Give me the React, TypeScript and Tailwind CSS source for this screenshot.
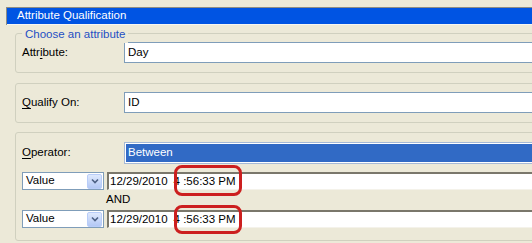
import React from 'react';

const font = { fontFamily: '"Liberation Sans", Arial, sans-serif' };

function Label({ pre, u, post }: { pre: string; u: string; post: string }) {
  return (
    <span className="w-[102px] shrink-0 text-[11.5px] text-black">
      {pre}
      <span className="underline underline-offset-2">{u}</span>
      {post}
    </span>
  );
}

function Combo() {
  return (
    <div className="flex h-[18px] w-[82px] shrink-0 items-center justify-between border border-[#7f9db9] bg-white pl-[3px] pr-px text-[11.5px]">
      <span>Value</span>
      <div className="flex h-[15px] w-[15px] items-center justify-center rounded-[2px] border border-[#b9cdf9] bg-gradient-to-b from-[#dfe9fd] to-[#b3c8f5]">
        <svg width="8" height="6" viewBox="0 0 8 6">
          <path d="M1 1.5 L4 4.5 L7 1.5" fill="none" stroke="#4d6185" strokeWidth="1.6" />
        </svg>
      </div>
    </div>
  );
}

function DateRow({ tall }: { tall?: boolean }) {
  return (
    <div className="flex items-center gap-[3px]">
      <Combo />
      <div className="relative flex h-[18px] flex-1 items-center border-t-2 border-l-2 border-t-[#7a776b] border-l-[#7a776b] border-b border-r border-b-[#f4f2ea] border-r-[#f4f2ea] bg-white pl-[1px] text-[11.5px]">
        <span>12/29/2010</span>
        <span className="ml-[6px]">4 :56:33 PM</span>
        <div
          className={
            tall
              ? 'absolute -top-[9px] left-[65px] h-[31px] w-[68px] rounded-[8px] border-[3px] border-[#cc1f1f]'
              : 'absolute -top-[7px] left-[65px] h-[29px] w-[68px] rounded-[8px] border-[3px] border-[#cc1f1f]'
          }
        />
      </div>
    </div>
  );
}

export default function App() {
  return (
    <div className="relative h-[243px] w-[532px] overflow-hidden bg-[#ece9d8]" style={font}>
      <div className="ml-[6px] mt-[7px] border-l border-t border-[#8d8c84]">
        <div className="flex h-[16px] items-center bg-[#0054e3] pl-[10px] text-[11.5px] text-white">
          Attribute Qualification
        </div>
        <div className="h-px bg-[#f7f6f1]" />
      </div>

      <div className="ml-[15px] w-[540px]">
        {/* group 1 */}
        <div className="relative mt-[8px] rounded-[3px] border border-[#d0d0bf] pl-[6px] pt-[8px] pb-[9px]">
          <span className="absolute -top-[8px] left-[6px] bg-[#ece9d8] px-[3px] text-[11.5px] text-[#1e4fc4]">
            Choose an attribute
          </span>
          <div className="flex items-center">
            <Label pre="Attr" u="i" post="bute:" />
            <div className="flex h-[21px] flex-1 items-center border border-[#7f9db9] bg-white pl-[3px] text-[11.5px]">Day</div>
          </div>
        </div>

        {/* group 2 */}
        <div className="mt-[10px] rounded-[3px] border border-[#d0d0bf] pl-[6px] pt-[8px] pb-[9px]">
          <div className="flex items-center">
            <Label pre="" u="Q" post="ualify On:" />
            <div className="flex h-[21px] flex-1 items-center border border-[#7f9db9] bg-white pl-[3px] text-[11.5px]">ID</div>
          </div>
        </div>

        {/* group 3 */}
        <div className="mt-[9px] h-[109px] rounded-[3px] border border-[#d0d0bf] pl-[6px] pt-[9px]">
          <div className="flex items-center">
            <Label pre="" u="O" post="perator:" />
            <div className="flex h-[22px] flex-1 border border-[#a5b9d6] bg-white p-px">
              <div className="flex flex-1 items-center bg-[#316ac5] pl-[2px] text-[11.5px] text-white">Between</div>
            </div>
          </div>
          <div className="mt-[8px] flex flex-col">
            <DateRow tall />
            <div className="flex h-[20px] items-center pl-[84px] text-[11.5px]">AND</div>
            <DateRow />
          </div>
        </div>
      </div>
    </div>
  );
}
